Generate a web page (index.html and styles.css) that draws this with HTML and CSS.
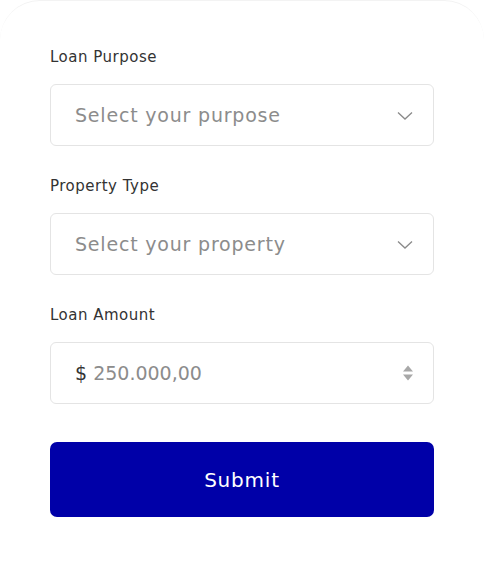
FILE: index.html
```html
<!DOCTYPE html>
<html lang="en">
<head>
    <meta charset="UTF-8">
    <meta name="viewport" content="width=device-width, initial-scale=1.0">
    <title>Loan Application</title>
    <link rel="stylesheet" href="styles.css">
</head>
<body>
    <form class="loan-card">
        <div class="field">
            <label class="field-label">Loan Purpose</label>
            <div class="field-box">
                <span class="placeholder">Select your purpose</span>
                <svg class="chevron" width="16" height="10" viewBox="0 0 16 10"><path d="M1 1.5 L8 8 L15 1.5" fill="none" stroke="#8a8a8a" stroke-width="1.3"/></svg>
            </div>
        </div>
        <div class="field">
            <label class="field-label">Property Type</label>
            <div class="field-box">
                <span class="placeholder">Select your property</span>
                <svg class="chevron" width="16" height="10" viewBox="0 0 16 10"><path d="M1 1.5 L8 8 L15 1.5" fill="none" stroke="#8a8a8a" stroke-width="1.3"/></svg>
            </div>
        </div>
        <div class="field">
            <label class="field-label">Loan Amount</label>
            <div class="field-box">
                <span class="amount"><span class="currency">$</span> 250.000,00</span>
                <svg class="spinner" width="10" height="16" viewBox="0 0 10 16"><path d="M5 0.5 L10 6.5 H0 Z M5 15.5 L10 9.5 H0 Z" fill="#a8a8a8"/></svg>
            </div>
        </div>
        <button type="button" class="submit-btn">Submit</button>
    </form>
</body>
</html>
```

FILE: styles.css
```css
* {
    margin: 0;
    padding: 0;
    box-sizing: border-box;
}
body {
    font-family: "DejaVu Sans", sans-serif;
    background: #ffffff;
    color: #333;
}
.loan-card {
    min-height: 566px;
    padding: 47px 50px 40px;
    border-top: 1px solid #f3f3f3;
    border-radius: 40px 40px 0 0;
    background: #fff;
}
.field {
    margin-bottom: 31px;
}
.field-label {
    display: block;
    font-size: 15px;
    line-height: 18px;
    letter-spacing: 0.5px;
    color: #333;
    margin-bottom: 18px;
}
.field-box {
    height: 62px;
    border: 1px solid #e4e4e4;
    border-radius: 6px;
    display: flex;
    align-items: center;
    justify-content: space-between;
    padding: 0 20px 0 24px;
}
.placeholder,
.amount {
    font-size: 19px;
    letter-spacing: 0.8px;
    color: #8c8c8c;
}
.amount {
    letter-spacing: 0;
}
.currency {
    color: #333;
}
.chevron {
    margin-top: 2px;
}
.submit-btn {
    display: block;
    width: 100%;
    height: 75px;
    margin-top: 38px;
    border: none;
    border-radius: 7px;
    background: #0000a8;
    color: #fff;
    font-family: inherit;
    font-size: 20px;
    letter-spacing: 0.8px;
    cursor: pointer;
}
```
